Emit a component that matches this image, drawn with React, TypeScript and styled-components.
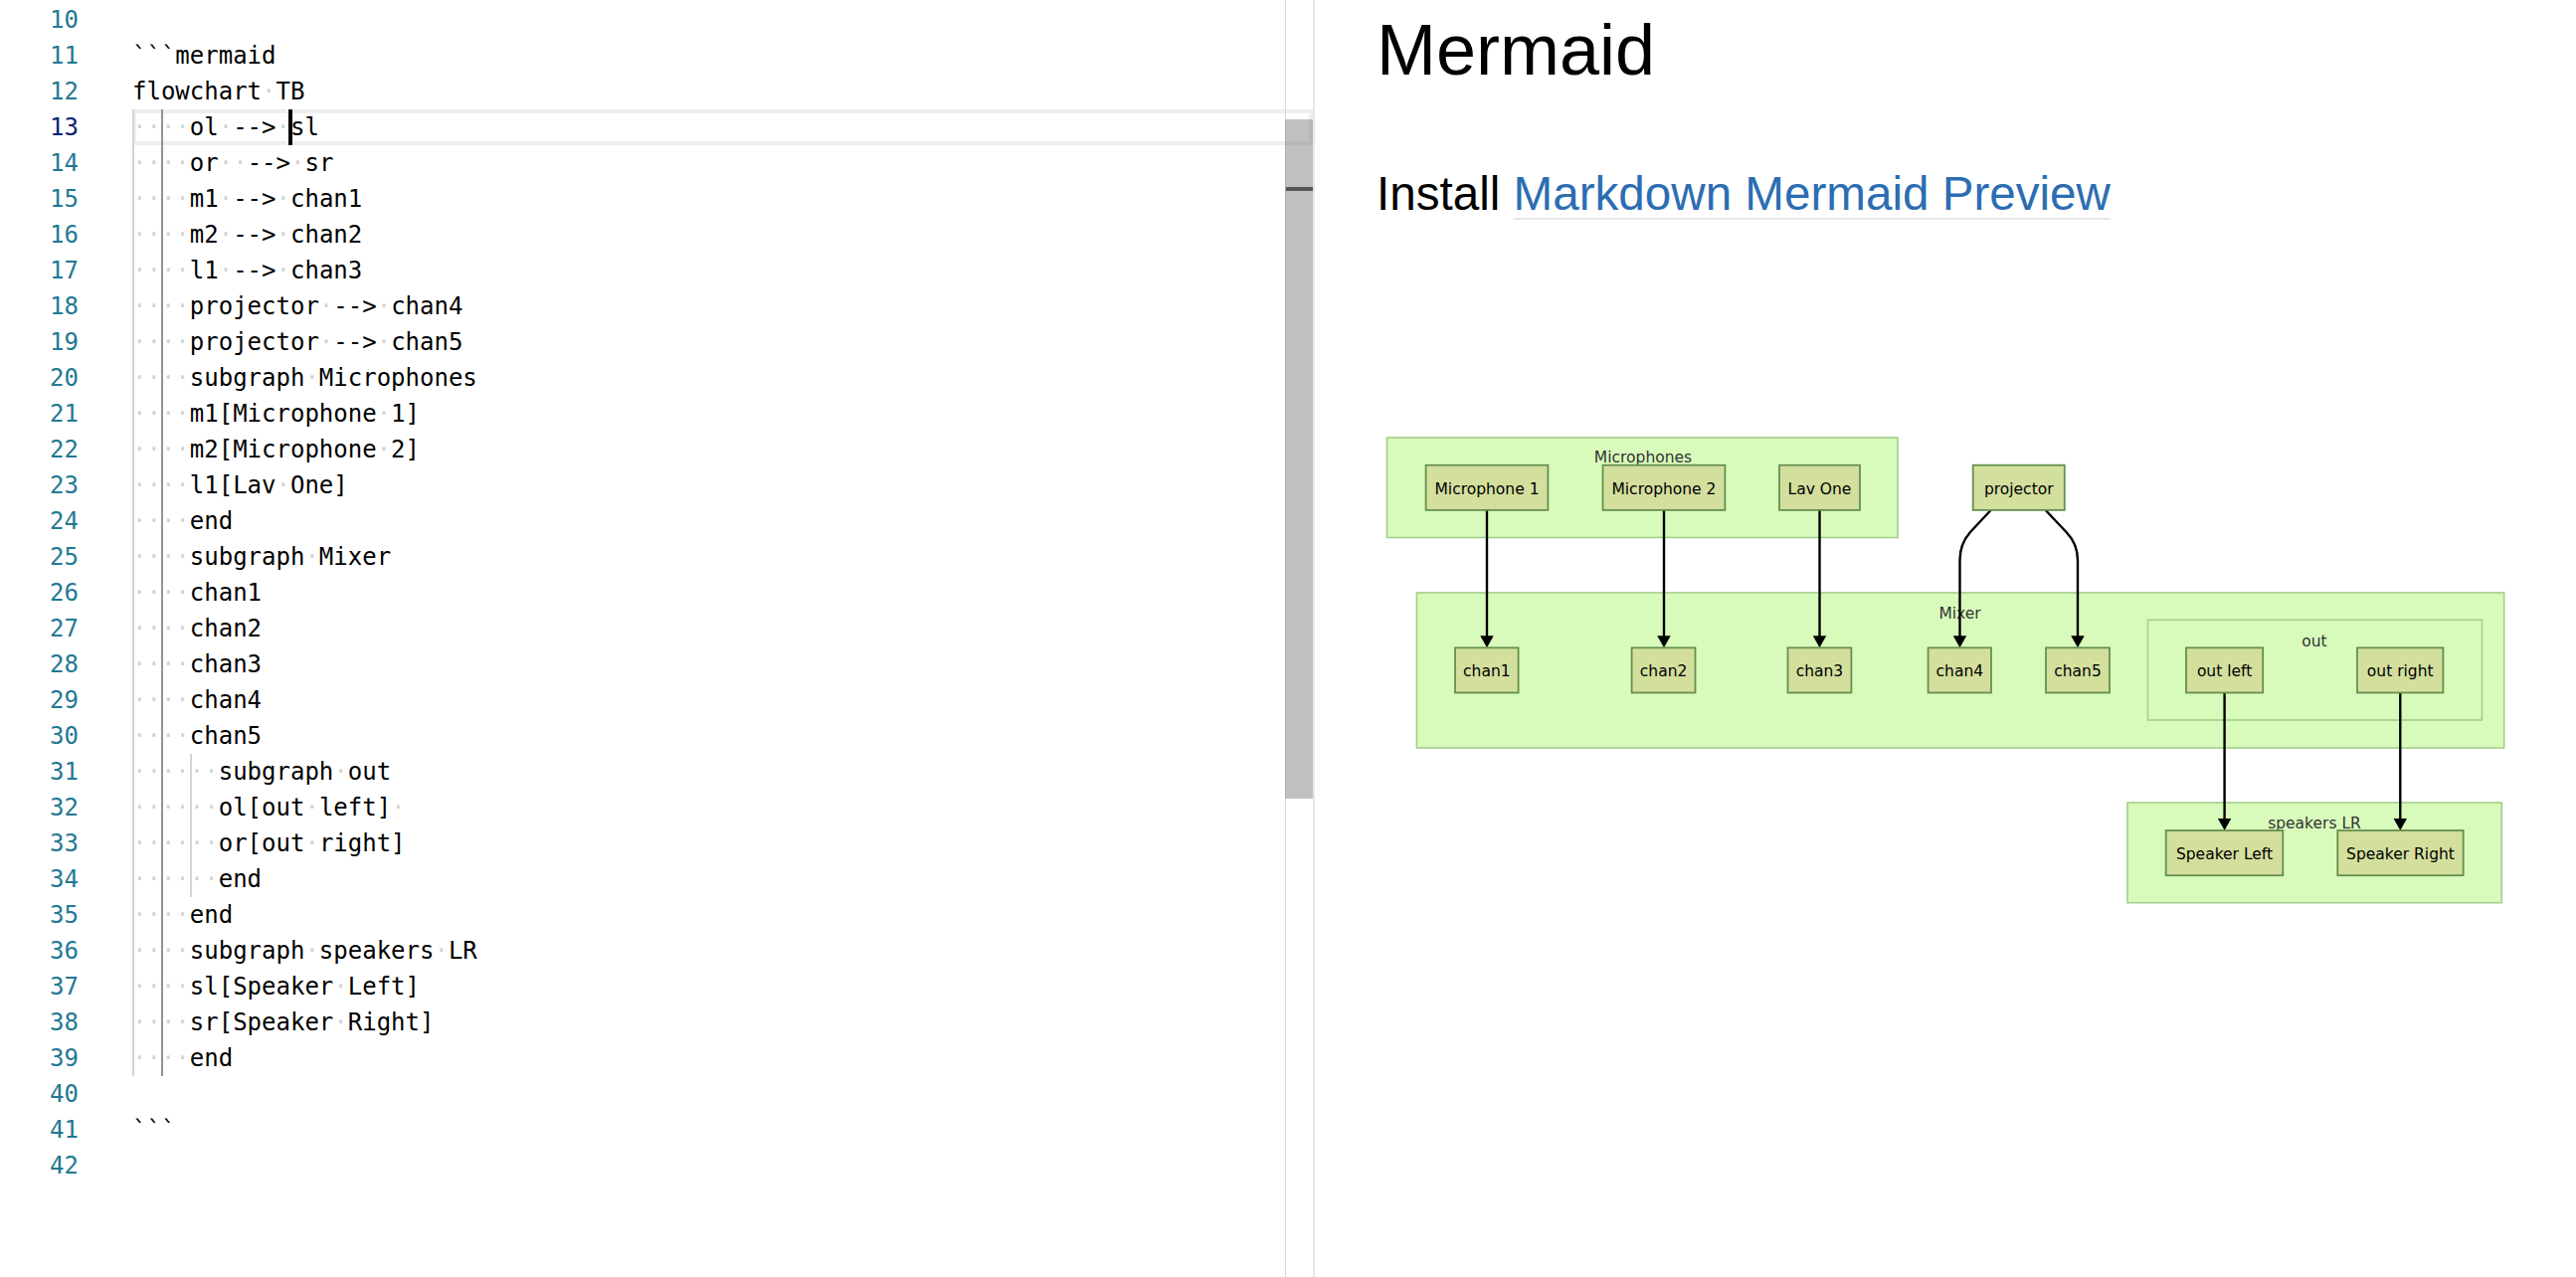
import React from "react";
import styled, { createGlobalStyle, css } from "styled-components";

const GlobalStyle = createGlobalStyle`
  html, body { margin: 0; padding: 0; background: #ffffff; }
  body { width: 2590px; height: 1284px; overflow: hidden; }
`;

const Page = styled.div`
  display: flex;
  width: 2590px;
  height: 1284px;
  background: #ffffff;
`;

/* ---------- Editor ---------- */

const Editor = styled.div`
  position: relative;
  flex: 0 0 1320px;
  height: 100%;
  overflow: hidden;
  font-family: "DejaVu Sans Mono", "Liberation Mono", monospace;
  font-size: 24px;
  color: #000000;
`;

const Lines = styled.div`
  padding-top: 2px;
`;

const Row = styled.div`
  display: flex;
  height: 36px;
  line-height: 36px;
`;

const LineNumber = styled.div<{ $active?: boolean }>`
  flex: 0 0 79px;
  margin-right: 54px;
  text-align: right;
  color: ${(p) => (p.$active ? "#0b216f" : "#237893")};
`;

const Code = styled.div<{ $current?: boolean }>`
  position: relative;
  flex: 1;
  white-space: pre;
  ${(p) =>
    p.$current &&
    css`
      box-shadow: inset 0 0 0 4px #eeeeee;
    `}
`;

const Indent = styled.span<{ $guide: string }>`
  display: inline-block;
  height: 36px;
  vertical-align: top;
  box-shadow: inset 2px 0 0 ${(p) => p.$guide};
`;

const Space = styled.span`
  color: rgba(51, 51, 51, 0.22);
`;

const Cursor = styled.span<{ $col: number }>`
  position: absolute;
  top: 0;
  left: calc(${(p) => p.$col}ch - 2px);
  width: 4px;
  height: 36px;
  background: #000000;
`;

const ScrollTrack = styled.div`
  position: absolute;
  top: 0;
  right: 0;
  width: 28px;
  height: 100%;
  box-sizing: border-box;
  border-left: 1px solid #dadada;
`;

const Thumb = styled.div`
  position: absolute;
  left: -1px;
  right: 0;
  top: 120px;
  height: 683px;
  background: rgba(100, 100, 100, 0.4);
`;

const CursorMark = styled.div`
  position: absolute;
  left: 0;
  right: 0;
  top: 188px;
  height: 4px;
  background: #565656;
`;

const Divider = styled.div`
  flex: 0 0 2px;
  background: #e7e7e7;
`;

/* ---------- Preview ---------- */

const Preview = styled.div`
  flex: 1;
  padding: 5px 0 0 62px;
  font-family: "Liberation Sans", Arial, sans-serif;
  color: #000000;
`;

const Title = styled.h1`
  margin: 0;
  font-size: 72px;
  line-height: 90px;
  font-weight: 400;
`;

const Subtitle = styled.h2`
  margin: 70px 0 0;
  font-size: 47.6px;
  line-height: 60px;
  font-weight: 400;
`;

const Link = styled.a`
  color: #2c6db2;
  text-decoration: underline;
  text-decoration-color: #e6e6e6;
  text-decoration-thickness: 2px;
  text-underline-offset: 8px;
`;

const Diagram = styled.svg`
  display: block;
  margin-top: 205px;
`;

const ClusterBox = styled.rect`
  fill: #d8fbbb;
  stroke: #a3cf8b;
  stroke-width: 1.6px;
`;

const ClusterLabel = styled.text`
  font-family: "DejaVu Sans", Verdana, sans-serif;
  font-size: 15.5px;
  fill: #333333;
  text-anchor: middle;
`;

const NodeBox = styled.rect`
  fill: #d3df9d;
  stroke: #668f4f;
  stroke-width: 1.8px;
`;

const NodeLabel = styled.text`
  font-family: "DejaVu Sans", Verdana, sans-serif;
  font-size: 15.5px;
  fill: #000000;
  text-anchor: middle;
`;

const EdgeLine = styled.path`
  fill: none;
  stroke: #000000;
  stroke-width: 2.4px;
`;

const ArrowHead = styled.path`
  fill: #000000;
  stroke: none;
`;

/* ---------- Data ---------- */

const codeLines: string[] = [
  "",
  "```mermaid",
  "flowchart TB",
  "    ol --> sl",
  "    or  --> sr",
  "    m1 --> chan1",
  "    m2 --> chan2",
  "    l1 --> chan3",
  "    projector --> chan4",
  "    projector --> chan5",
  "    subgraph Microphones",
  "    m1[Microphone 1]",
  "    m2[Microphone 2]",
  "    l1[Lav One]",
  "    end",
  "    subgraph Mixer",
  "    chan1",
  "    chan2",
  "    chan3",
  "    chan4",
  "    chan5",
  "      subgraph out",
  "      ol[out left] ",
  "      or[out right]",
  "      end",
  "    end",
  "    subgraph speakers LR",
  "    sl[Speaker Left]",
  "    sr[Speaker Right]",
  "    end",
  "",
  "```",
  "",
];

const FIRST_LINE = 10;
const CURRENT_LINE = 13;
const CURSOR_COL = 11;

const clusters = [
  { label: "Microphones", x: 1394.5, y: 440, w: 513.5, h: 100.5, lx: 1652, ly: 465 },
  { label: "Mixer", x: 1424.4, y: 596, w: 1093.3, h: 156, lx: 1970.6, ly: 621.5 },
  { label: "out", x: 2159.5, y: 623.3, w: 336, h: 100.7, lx: 2327, ly: 650 },
  { label: "speakers LR", x: 2139, y: 807, w: 376.3, h: 100.7, lx: 2327, ly: 832.5 },
];

const nodes = [
  { label: "Microphone 1", x: 1433.6, y: 467.7, w: 122.8 },
  { label: "Microphone 2", x: 1611.5, y: 467.7, w: 122.9 },
  { label: "Lav One", x: 1789, y: 467.7, w: 81 },
  { label: "projector", x: 1983.7, y: 467.7, w: 92.1 },
  { label: "chan1", x: 1463, y: 651.3, w: 63.6 },
  { label: "chan2", x: 1640.6, y: 651.3, w: 63.9 },
  { label: "chan3", x: 1797.5, y: 651.3, w: 63.9 },
  { label: "chan4", x: 1938.6, y: 651.3, w: 63.4 },
  { label: "chan5", x: 2057, y: 651.3, w: 64 },
  { label: "out left", x: 2198, y: 651.3, w: 77.2 },
  { label: "out right", x: 2370, y: 651.3, w: 86.4 },
  { label: "Speaker Left", x: 2177.7, y: 835, w: 117.6 },
  { label: "Speaker Right", x: 2350.3, y: 835, w: 126.4 },
];
const NODE_H = 45.2;

const edges = [
  { d: "M1495,513 L1495,645", tx: 1495, ty: 651.3 },
  { d: "M1673,513 L1673,645", tx: 1673, ty: 651.3 },
  { d: "M1829.5,513 L1829.5,645", tx: 1829.5, ty: 651.3 },
  { d: "M2001.6,513 L1981,535 Q1970.5,547 1970.5,563 L1970.5,645", tx: 1970.5, ty: 651.3 },
  { d: "M2056.7,513 L2077.5,535 Q2089,547 2089,563 L2089,645", tx: 2089, ty: 651.3 },
  { d: "M2236.6,696.3 L2236.6,829", tx: 2236.6, ty: 835 },
  { d: "M2413.3,696.3 L2413.3,829", tx: 2413.3, ty: 835 },
];

/* ---------- Rendering helpers ---------- */

function renderRest(rest: string) {
  const parts = rest.split(/( +)/).filter((s) => s.length > 0);
  return parts.map((part, i) =>
    part[0] === " " ? <Space key={i}>{"·".repeat(part.length)}</Space> : <span key={i}>{part}</span>
  );
}

function CodeLine({ text }: { text: string }) {
  const lead = (text.match(/^ */) || [""])[0].length;
  const units = Math.floor(lead / 2);
  const rest = text.slice(units * 2);
  return (
    <>
      {Array.from({ length: units }).map((_, i) => (
        <Indent key={i} $guide={i === 1 ? "#939393" : "#d3d3d3"}>
          <Space>··</Space>
        </Indent>
      ))}
      {renderRest(rest)}
    </>
  );
}

function Flowchart() {
  return (
    <Diagram width={1180} height={490} viewBox="1384 430 1180 490">
      {clusters.map((c) => (
        <g key={c.label}>
          <ClusterBox x={c.x} y={c.y} width={c.w} height={c.h} />
          <ClusterLabel x={c.lx} y={c.ly}>
            {c.label}
          </ClusterLabel>
        </g>
      ))}
      {edges.map((e, i) => (
        <g key={i}>
          <EdgeLine d={e.d} />
          <ArrowHead d={`M${e.tx - 6.7},${e.ty - 12} L${e.tx + 6.7},${e.ty - 12} L${e.tx},${e.ty} Z`} />
        </g>
      ))}
      {nodes.map((n) => (
        <g key={n.label}>
          <NodeBox x={n.x} y={n.y} width={n.w} height={NODE_H} />
          <NodeLabel x={n.x + n.w / 2} y={n.y + 28.8}>
            {n.label}
          </NodeLabel>
        </g>
      ))}
    </Diagram>
  );
}

export default function App() {
  return (
    <>
      <GlobalStyle />
      <Page>
        <Editor>
          <Lines>
            {codeLines.map((text, i) => {
              const n = FIRST_LINE + i;
              const current = n === CURRENT_LINE;
              return (
                <Row key={n}>
                  <LineNumber $active={current}>{n}</LineNumber>
                  <Code $current={current}>
                    <CodeLine text={text} />
                    {current && <Cursor $col={CURSOR_COL} />}
                  </Code>
                </Row>
              );
            })}
          </Lines>
          <ScrollTrack>
            <Thumb />
            <CursorMark />
          </ScrollTrack>
        </Editor>
        <Divider />
        <Preview>
          <Title>Mermaid</Title>
          <Subtitle>
            Install <Link href="#">Markdown Mermaid Preview</Link>
          </Subtitle>
          <Flowchart />
        </Preview>
      </Page>
    </>
  );
}
